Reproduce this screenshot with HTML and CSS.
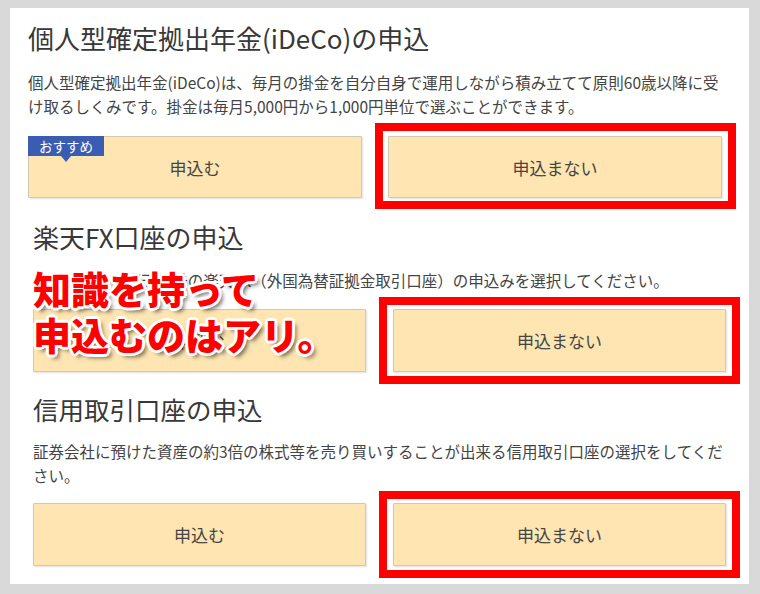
FILE: index.html
```html
<!DOCTYPE html>
<html lang="ja">
<head>
<meta charset="utf-8">
<title>口座の申込</title>
<link rel="stylesheet" href="styles.css">
</head>
<body>
<div class="panel">
  <section class="sec sec-first">
    <h2 class="sec-title">個人型確定拠出年金(iDeCo)の申込</h2>
    <p class="sec-desc">個人型確定拠出年金(iDeCo)は、毎月の掛金を自分自身で運用しながら積み立てて原則60歳以降に受け取るしくみです。掛金は毎月5,000円から1,000円単位で選ぶことができます。</p>
    <div class="choices">
      <div class="choice">
        <button class="btn" type="button">申込む</button>
        <span class="badge">おすすめ</span>
      </div>
      <div class="choice">
        <button class="btn" type="button">申込まない</button>
        <span class="mark mark-first"></span>
      </div>
    </div>
  </section>

  <section class="sec sec-fx">
    <h2 class="sec-title">楽天FX口座の申込</h2>
    <p class="sec-desc">取引ができる楽天証券の楽天FX（外国為替証拠金取引口座）の申込みを選択してください。</p>
    <div class="choices choices-tall">
      <div class="choice">
        <button class="btn" type="button">申込む</button>
      </div>
      <div class="choice">
        <button class="btn" type="button">申込まない</button>
        <span class="mark"></span>
      </div>
    </div>
    <div class="callout">知識を持って<br>申込むのはアリ。</div>
  </section>

  <section class="sec sec-margin">
    <h2 class="sec-title">信用取引口座の申込</h2>
    <p class="sec-desc">証券会社に預けた資産の約3倍の株式等を売り買いすることが出来る信用取引口座の選択をしてください。</p>
    <div class="choices choices-tall">
      <div class="choice">
        <button class="btn" type="button">申込む</button>
      </div>
      <div class="choice">
        <button class="btn" type="button">申込まない</button>
        <span class="mark"></span>
      </div>
    </div>
  </section>
</div>
</body>
</html>
```

FILE: styles.css
```css
html, body {
  margin: 0;
  padding: 0;
}

body {
  background: #d9d9d9;
  font-family: "Noto Sans CJK JP", "Noto Sans", sans-serif;
  color: #3a3a3a;
}

.panel {
  background: #fff;
  margin: 8px 11px 0 10px;
  height: 576px;
  box-sizing: border-box;
}

.sec {
  position: relative;
  padding: 0 23px 0 23px;
}

.sec-first {
  padding: 12px 27px 0 18px;
}

.sec-fx {
  padding-top: 21px;
}

.sec-margin {
  padding-top: 19px;
}

.sec-title {
  margin: 0;
  font-size: 25.5px;
  line-height: 36px;
  font-weight: 400;
  color: #383838;
}

.sec-first .sec-title {
  font-size: 26px;
}

.sec-fx .sec-title {
  font-size: 26px;
}

.sec-desc {
  margin: 14px 0 0;
  font-size: 15.5px;
  line-height: 24px;
  color: #444;
}

.sec-fx .sec-desc {
  margin-top: 13px;
}

.sec-margin .sec-desc {
  margin-top: 12px;
}

.choices {
  display: grid;
  grid-template-columns: 1fr 1fr;
  column-gap: 26px;
  margin-top: 18px;
}

.sec-fx .choices {
  margin-top: 17px;
  column-gap: 27px;
}

.sec-margin .choices {
  margin-top: 16px;
  column-gap: 27px;
}

.choice {
  position: relative;
}

.btn {
  display: block;
  width: 100%;
  height: 62px;
  margin: 0;
  padding: 0;
  background: #fee5b1;
  border: 1px solid #d3c8b2;
  border-radius: 1px;
  box-shadow: 1px 1px 2px rgba(0, 0, 0, 0.12);
  font-family: "Noto Sans CJK JP", "Noto Sans", sans-serif;
  font-size: 17px;
  color: #454545;
  cursor: pointer;
}

.choices-tall .btn {
  height: 63px;
}

.badge {
  position: absolute;
  top: 0;
  left: 0;
  width: 76px;
  height: 20px;
  background: #3a5db3;
  color: #fff;
  font-size: 13.5px;
  line-height: 20px;
  text-align: center;
}

.badge::after {
  content: "";
  position: absolute;
  left: 33px;
  top: 20px;
  border-left: 5px solid transparent;
  border-right: 5px solid transparent;
  border-top: 6px solid #3a5db3;
}

.mark {
  position: absolute;
  top: -12px;
  right: -14px;
  bottom: -12px;
  left: -14px;
  border: 8px solid #f00;
  pointer-events: none;
}

.mark-first {
  top: -13px;
  bottom: -11px;
  left: -13px;
}

.callout {
  position: absolute;
  left: 23px;
  top: 67px;
  font-size: 38px;
  line-height: 46px;
  font-weight: 900;
  color: #f00;
  white-space: nowrap;
  text-shadow:
    3px 0 0 #fff, -3px 0 0 #fff, 0 3px 0 #fff, 0 -3px 0 #fff,
    2px 2px 0 #fff, -2px 2px 0 #fff, 2px -2px 0 #fff, -2px -2px 0 #fff,
    4px 4px 4px rgba(0, 0, 0, 0.55);
}
```
